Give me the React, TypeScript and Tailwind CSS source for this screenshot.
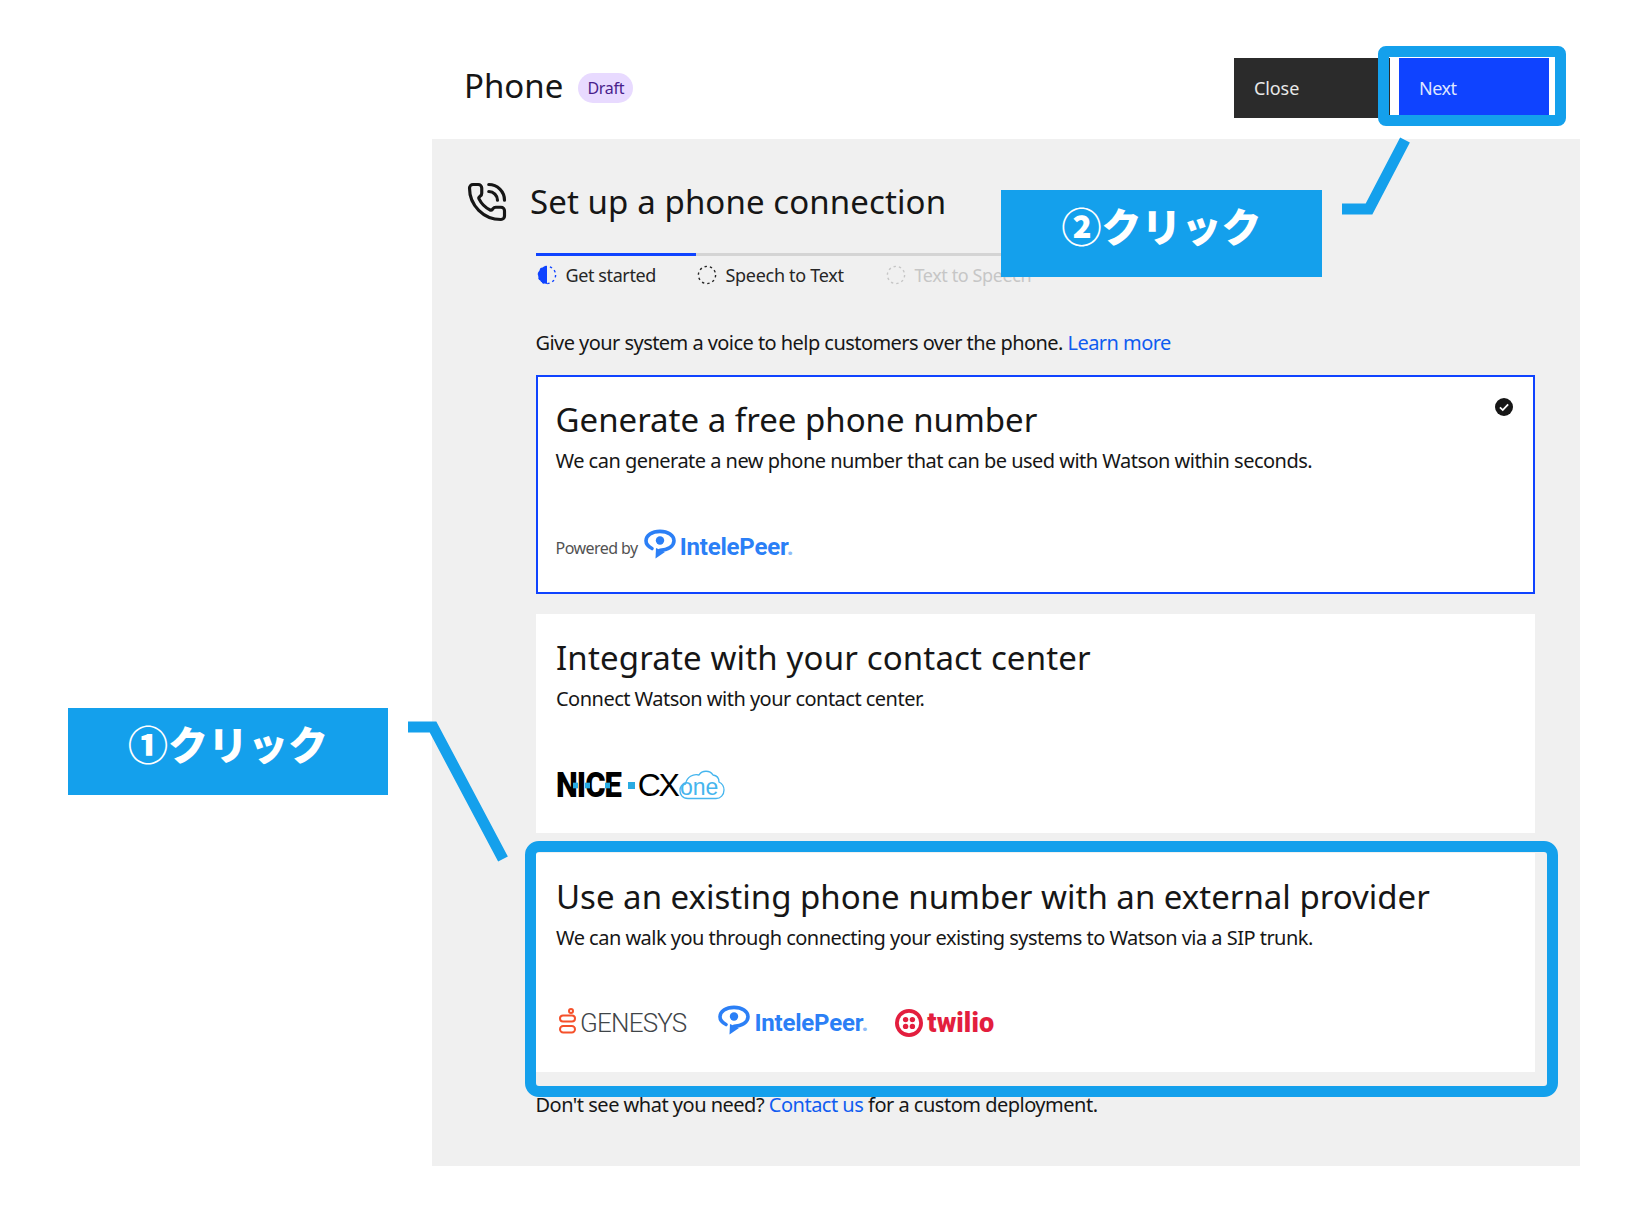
import { PhoneCall } from "lucide-react"

const plex = "font-['Noto_Sans',sans-serif]"
const jp = "font-['Noto_Sans_CJK_JP',sans-serif]"

function IntelePeerIcon({ className }: { className?: string }) {
	return (
		<svg viewBox="0 0 32 30" className={className} fill="none">
			<path d="M8 19.5C4 17.5 2 15 2 11.8 2 6.5 8 2.4 16 2.4s14 4.1 14 9.4c0 5.3-6 9.4-14 9.4" stroke="#2b7ff6" strokeWidth="3.6" strokeLinecap="round" />
			<path d="M11.5 29.5 12 19l9 4z" fill="#2b7ff6" />
			<circle cx="16" cy="11.5" r="4.2" fill="#2b7ff6" />
		</svg>
	)
}

function IntelePeer() {
	return (
		<span className="flex items-center">
			<IntelePeerIcon className="w-[32px] h-[30px] -mt-[7px]" />
			<span className="ml-[4px] font-['Roboto',sans-serif] text-[24px] font-bold leading-none text-[#2b7ff6] tracking-[-0.2px]">
				IntelePeer<span className="text-[#8fbcf8]">.</span>
			</span>
		</span>
	)
}

function Step({ label, icon, className, labelClass }: { label: string; icon: "half" | "dash" | "off"; className: string; labelClass: string }) {
	return (
		<div className={`flex flex-col border-t-[3px] ${className}`}>
			<div className="flex items-center pl-[1px] pt-[7px]">
				<svg viewBox="0 0 20 20" className="w-[20px] h-[20px] shrink-0" fill="none">
					{icon === "half" && <path d="M10 1a9 9 0 0 0 0 18z" fill="#0f43ff" />}
					<circle
						cx="10"
						cy="10"
						r="8.6"
						strokeWidth="1.4"
						strokeDasharray="2.4 3"
						stroke={icon === "half" ? "#0f43ff" : icon === "dash" ? "#262626" : "#c6c6c6"}
					/>
				</svg>
				<span className={`ml-[9px] text-[18px] leading-[24px] whitespace-nowrap ${labelClass}`}>{label}</span>
			</div>
		</div>
	)
}

function Card({ title, sub, className, titleClass, subClass, logoClass, children }: { title: string; sub: string; className?: string; titleClass: string; subClass: string; logoClass: string; children: React.ReactNode }) {
	return (
		<div className={`relative h-[219px] bg-white flex flex-col pl-[20.5px] ${className ?? ""}`}>
			<h3 className={`text-[33px] leading-[44px] text-[#161616] whitespace-nowrap ${titleClass}`}>{title}</h3>
			<p className={`text-[20px] leading-[28px] tracking-[-0.52px] text-[#161616] whitespace-nowrap ${subClass}`}>{sub}</p>
			<div className={`mt-auto flex items-center h-[30px] ${logoClass}`}>{children}</div>
		</div>
	)
}

export default function App() {
	return (
		<div className={`relative w-[1646px] h-[1214px] bg-white overflow-hidden ${plex}`}>
			<div className="ml-[432px] w-[1148px]">
				<header className="h-[139px] flex pl-[32px] pr-[31px] pt-[58px]">
					<h1 className="text-[33px] leading-[60px] -mt-[2px] text-[#161616]">Phone</h1>
					<span className="ml-[15px] mt-[15px] w-[55px] h-[30px] rounded-full bg-[#e8daff] text-[#491d8b] text-[16px] tracking-[-0.3px] flex items-center justify-center">Draft</span>
					<div className="ml-auto flex h-[60px]">
						<button className="w-[156px] bg-[#2b2b2b] text-[#e8e8e8] text-[18px] tracking-[-0.1px] text-left pl-[20px]">Close</button>
						<button className="ml-[9px] w-[150px] bg-[#0f43ff] text-[#dfe6ff] text-[18px] tracking-[-0.5px] text-left pl-[20px]">Next</button>
					</div>
				</header>
				<main className="h-[1027px] bg-[#f0f0f0]">
					<div className="flex items-center pl-[34px] pt-[42px]">
						<PhoneCall className="w-[42px] h-[42px] text-[#161616]" strokeWidth={1.8} />
						<h2 className="ml-[22px] text-[33px] leading-[42px] tracking-[0.1px] text-[#161616]">Set up a phone connection</h2>
					</div>
					<div className="ml-[103.5px] w-[999.5px]">
						<div className="flex mt-[30px] h-[44px]">
							<Step label="Get started" icon="half" className="w-[160px] border-[#0f43ff]" labelClass="text-[#262626] tracking-[-0.4px]" />
							<Step label="Speech to Text" icon="dash" className="w-[189px] border-[#d4d4d4]" labelClass="text-[#262626] tracking-[-0.3px]" />
							<Step label="Text to Speech" icon="off" className="w-[200px] border-[#d4d4d4]" labelClass="text-[#c6c6c6] tracking-[-0.4px]" />
						</div>
						<p className="mt-[32px] text-[20px] leading-[28px] tracking-[-0.55px] text-[#161616]">
							Give your system a voice to help customers over the phone. <a className="text-[#0f5cf0]">Learn more</a>
						</p>
						<div className="mt-[18px] flex flex-col gap-[20px]">
							<Card
								title="Generate a free phone number"
								sub="We can generate a new phone number that can be used with Watson within seconds."
								className="border-[2.5px] border-[#0f43ff] !pl-[18px]"
								titleClass="mt-[21px]"
								subClass="mt-[5px]"
								logoClass="mb-[30px]"
							>
								<span className="text-[16px] tracking-[-0.55px] text-[#525252] mr-[6px] mt-[1px]">Powered by</span>
								<IntelePeer />
								<svg viewBox="0 0 20 20" className="absolute right-[20px] top-[21px] w-[18px] h-[18px]">
									<circle cx="10" cy="10" r="10" fill="#161616" />
									<path d="M5.5 10.5 8.6 13.4 14.6 7" fill="none" stroke="#fff" strokeWidth="2" />
								</svg>
							</Card>
							<Card title="Integrate with your contact center" sub="Connect Watson with your contact center." titleClass="mt-[22px] tracking-[0.15px]" subClass="mt-[5px]" logoClass="mb-[33px]">
								<span className="relative scale-y-[1.13] font-['Roboto',sans-serif] font-black text-[31px] leading-none text-black tracking-[-1px]">
									NICE
									<span className="absolute left-[17px] top-[13px] w-[5px] h-[5px] bg-[#29abe2]" />
									<span className="absolute left-[29px] top-[13px] w-[5px] h-[5px] bg-[#29abe2]" />
									<span className="absolute left-[49px] top-[13px] w-[5px] h-[5px] bg-[#29abe2]" />
								</span>
								<span className="ml-[7px] w-[7px] h-[7px] bg-[#29abe2]" />
								<span className="ml-[3px] font-['Liberation_Sans',sans-serif] text-[32px] leading-none text-black tracking-[-2.5px]">CX</span>
								<svg viewBox="0 0 46 31" className="ml-[2px] w-[46px] h-[31px] -mt-[1px]" fill="none">
									<path d="M9 29.5C3 29.5 1 25 1 21.5c0-3.5 2-6 5.5-6.500C8 8 14 4.500 20 6c3-5 11-5 14 0 4 .5 6 3.500 6 7 3 1.500 5 4.500 5 8 0 5-3.500 8.500-8 8.500z" stroke="#45b5ee" strokeWidth="1.3" />
									<text x="1" y="26" fontSize="23" fill="#45b5ee" fontFamily="Liberation Sans">one</text>
								</svg>
							</Card>
							<Card title="Use an existing phone number with an external provider" sub="We can walk you through connecting your existing systems to Watson via a SIP trunk." titleClass="mt-[22px]" subClass="mt-[5px]" logoClass="mb-[34px]">
								<svg viewBox="0 0 18 26" className="ml-[2px] w-[18px] h-[26px] -mt-[4px]" fill="none" stroke="#f5512b" strokeWidth="2">
									<circle cx="13" cy="3" r="2" />
									<rect x="2" y="7.5" width="15" height="6" rx="3" />
									<rect x="2" y="18" width="15" height="6.5" rx="3.2" />
								</svg>
								<span className="ml-[4px] font-['Roboto',sans-serif] font-light text-[26px] leading-none text-[#3f4548] tracking-[-0.8px]">GENESYS</span>
								<span className="ml-[32px]"><IntelePeer /></span>
								<svg viewBox="0 0 28 28" className="ml-[27px] w-[28px] h-[28px]" fill="#e31e3e">
									<path fillRule="evenodd" d="M14 0a14 14 0 1 0 0 28 14 14 0 0 0 0-28zm0 24.200a10.200 10.200 0 1 1 0-20.400 10.200 10.200 0 0 1 0 20.400z" />
									<circle cx="10.600" cy="10.600" r="2.700" />
									<circle cx="17.400" cy="10.600" r="2.700" />
									<circle cx="10.600" cy="17.400" r="2.700" />
									<circle cx="17.400" cy="17.400" r="2.700" />
								</svg>
								<span className="ml-[4px] font-['Roboto',sans-serif] font-black text-[27px] leading-none text-[#e31e3e] tracking-[0.1px]">twilio</span>
							</Card>
						</div>
						<p className="mt-[19px] text-[20px] leading-[28px] tracking-[-0.5px] text-[#161616]">
							Don't see what you need? <a className="text-[#0f5cf0]">Contact us</a> for a custom deployment.
						</p>
					</div>
				</main>
			</div>

			{/* annotations drawn over the screenshot */}
			<svg className="absolute left-0 top-0 w-[1646px] h-[1214px] pointer-events-none" viewBox="0 0 1646 1214" fill="none" stroke="#14a0ec" strokeWidth="11">
				<path d="M1405 140 1369 209H1342" />
				<path d="M408 727H433L503 859" />
			</svg>
			<div className="absolute left-[1378px] top-[46px] w-[188px] h-[80px] border-[11px] border-[#14a0ec] rounded-[8px]" />
			<div className="absolute left-[525px] top-[841px] w-[1033px] h-[256px] border-[11px] border-[#14a0ec] rounded-[14px]" />
			<div className={`absolute left-[1001px] top-[190px] w-[321px] h-[87px] bg-[#14a0ec] text-white text-[40px] font-black leading-[70px] text-center ${jp}`}>②クリック</div>
			<div className={`absolute left-[68px] top-[708px] w-[320px] h-[87px] bg-[#14a0ec] text-white text-[40px] font-black leading-[70px] text-center ${jp}`}>①クリック</div>
		</div>
	)
}
